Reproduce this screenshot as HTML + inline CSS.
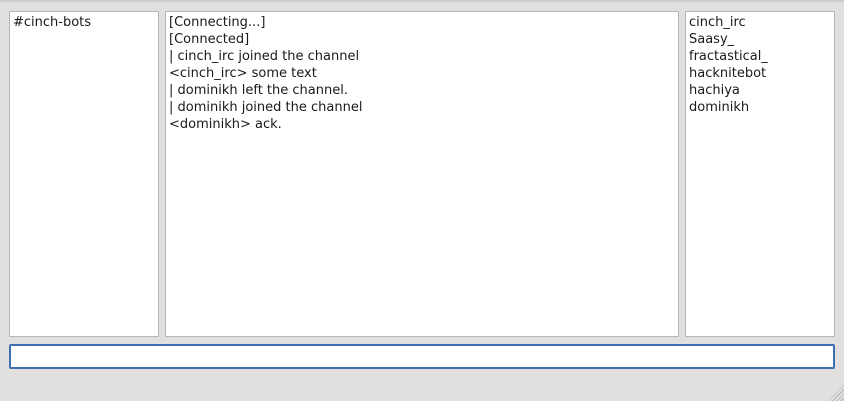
<!DOCTYPE html>
<html><head><style>
body{margin:0;width:844px;height:401px;background:#e1e0df;position:relative;overflow:hidden;font-family:"DejaVu Sans",sans-serif;font-size:13px;color:#1a1a1a}
.top{position:absolute;left:0;top:0;width:844px;height:2px;background:#cfcecd}
.box{position:absolute;top:11px;height:322px;background:#fff;border:1px solid #b8b7b6;box-sizing:content-box;padding:2px 0 0 3px;line-height:17px;white-space:pre}
.inp{position:absolute;left:9px;top:344px;width:824px;height:23px;border:1px solid #3b6fb0;border-radius:2px;background:#fff;box-shadow:inset 0 0 0 1px #3b6fb0}
.grip{position:absolute;right:0;bottom:0;width:16px;height:16px;background:repeating-linear-gradient(135deg,transparent 0 2px,#b5b4b3 2px 3px);clip-path:polygon(100% 0,100% 100%,0 100%)}
</style></head><body>
<div class="top"></div>
<div class="box" style="left:9px;width:145px">#cinch-bots</div>
<div class="box" style="left:165px;width:509px">[Connecting...]
[Connected]
| cinch_irc joined the channel
&lt;cinch_irc&gt; some text
| dominikh left the channel.
| dominikh joined the channel
&lt;dominikh&gt; ack.</div>
<div class="box" style="left:685px;width:145px">cinch_irc
Saasy_
fractastical_
hacknitebot
hachiya
dominikh</div>
<div class="inp"></div>
<div class="grip"></div>
</body></html>
